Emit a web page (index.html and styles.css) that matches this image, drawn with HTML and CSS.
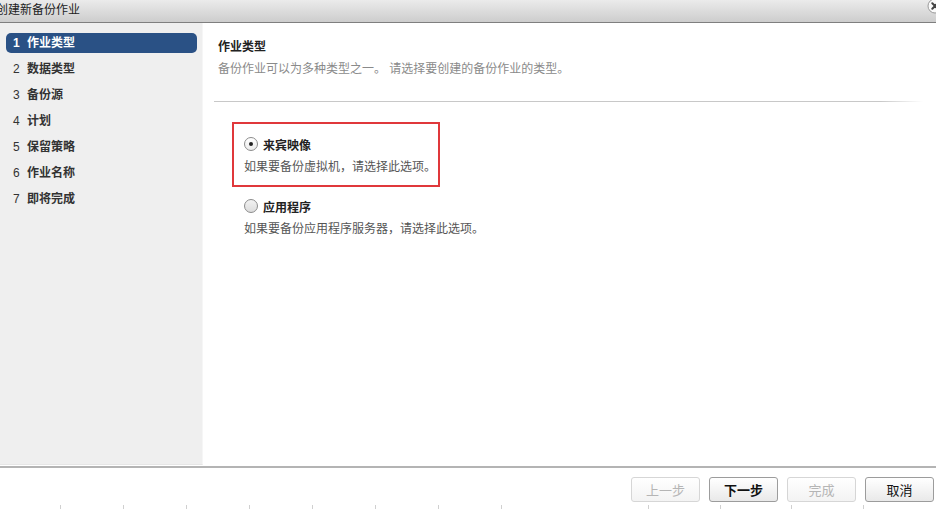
FILE: index.html
```html
<!DOCTYPE html>
<html lang="zh-CN">
<head>
  <meta charset="UTF-8">
  <meta name="viewport" content="width=device-width, initial-scale=1">
  <title>创建新备份作业</title>
  <link rel="stylesheet" href="styles.css">
</head>
<body>
  <div class="dialog">
    <!-- Title bar -->
    <div class="titlebar">
      <span class="title">创建新备份作业</span>
      <span class="close">
        <svg width="16" height="16" viewBox="0 0 16 16">
          <circle cx="8" cy="8" r="7" fill="#fafafa" stroke="#9a9a9a" stroke-width="1"/>
          <path d="M5.3 5.3 L10.7 10.7 M10.7 5.3 L5.3 10.7" stroke="#444" stroke-width="2" stroke-linecap="round"/>
        </svg>
      </span>
    </div>

    <div class="body">
      <!-- Steps -->
      <ul class="steps">
        <li class="step active"><span class="num">1</span>作业类型</li>
        <li class="step"><span class="num">2</span>数据类型</li>
        <li class="step"><span class="num">3</span>备份源</li>
        <li class="step"><span class="num">4</span>计划</li>
        <li class="step"><span class="num">5</span>保留策略</li>
        <li class="step"><span class="num">6</span>作业名称</li>
        <li class="step"><span class="num">7</span>即将完成</li>
      </ul>

      <!-- Content -->
      <div class="main">
        <div class="header">
          <div class="heading">作业类型</div>
          <div class="subtitle">备份作业可以为多种类型之一。 请选择要创建的备份作业的类型。</div>
        </div>
        <div class="separator"></div>

        <div class="options">
          <div class="option marked">
            <div class="radio-row"><span class="radio checked"></span><span class="label">来宾映像</span></div>
            <div class="desc">如果要备份虚拟机，请选择此选项。</div>
          </div>
          <div class="option">
            <div class="radio-row"><span class="radio"></span><span class="label">应用程序</span></div>
            <div class="desc">如果要备份应用程序服务器，请选择此选项。</div>
          </div>
        </div>
      </div>
    </div>

    <!-- Footer -->
    <div class="footer">
      <div class="buttons">
        <button class="button" disabled>上一步</button>
        <button class="button primary">下一步</button>
        <button class="button" disabled>完成</button>
        <button class="button">取消</button>
      </div>
      <div class="ticks">
        <div class="tick-group group-a">
          <span></span><span></span><span></span><span></span><span></span><span></span><span></span><span></span>
        </div>
        <div class="tick-group group-b">
          <span></span><span></span><span></span><span></span>
        </div>
      </div>
    </div>
  </div>
</body>
</html>
```

FILE: styles.css
```css
/* Wizard dialog */
html, body {
  margin: 0;
  padding: 0;
  background: #fff;
  overflow: hidden;
}
body {
  font-family: "Liberation Sans", "Noto Sans CJK SC", sans-serif;
  font-size: 12px;
  color: #333;
}
.dialog {
  width: 936px;
  height: 509px;
  display: flex;
  flex-direction: column;
  position: relative;
}

/* Title bar */
.titlebar {
  height: 22px;
  flex: none;
  background: linear-gradient(#ebebeb, #cdcdcd);
  border-bottom: 1px solid #7f7f7f;
  position: relative;
  display: flex;
  align-items: center;
}
.title {
  margin-left: -4px;
  font-size: 12px;
  color: #222;
  line-height: 16px;
  margin-top: -3px;
}
.close {
  position: absolute;
  right: -7px;
  top: -2px;
  width: 16px;
  height: 16px;
}

/* Body */
.body {
  flex: none;
  height: 443px;
  display: flex;
}
.steps {
  width: 203px;
  flex: none;
  margin: 0;
  padding: 10px 0 0;
  list-style: none;
  background: #efefef;
  border-right: 1px solid #f6f6f6;
  border-bottom: 1px solid #e6e6e6;
  box-sizing: border-box;
  height: 442px;
}
.step {
  height: 20px;
  line-height: 20px;
  margin: 0 5px 6px 6px;
  padding-left: 7px;
  border-radius: 5px;
  font-weight: bold;
  color: #333;
}
.step .num {
  font-weight: normal;
  display: inline-block;
  width: 14px;
}
.step.active {
  background: #2a5185;
  color: #fff;
}
.step.active .num {
  font-weight: bold;
}

.main {
  flex: 1;
  padding: 16px 13px 0 11px;
}
.header {
  padding-left: 4px;
}
.heading {
  font-weight: bold;
  line-height: 16px;
  color: #222;
}
.subtitle {
  margin-top: 6px;
  line-height: 16px;
  color: #8a8a8a;
}
.separator {
  margin-top: 24px;
  height: 1px;
  background: linear-gradient(to right, #c8c8c8 94%, rgba(200,200,200,0));
}

/* Options */
.options {
  margin: 34px 0 0 30px;
}
.option {
  position: relative;
  margin-bottom: 23px;
}
.option.marked::after {
  content: "";
  position: absolute;
  left: -12px;
  top: -14px;
  width: 204px;
  height: 61px;
  border: 2px solid #e0383b;
}
.radio-row {
  display: flex;
  align-items: center;
  height: 16px;
}
.radio {
  width: 12px;
  height: 12px;
  border: 1px solid #8c8c8c;
  border-radius: 50%;
  background: linear-gradient(#f2f2f2, #dcdcdc);
  position: relative;
  margin-right: 5px;
}
.radio.checked {
  background: linear-gradient(#ffffff, #ececec);
}
.radio.checked::after {
  content: "";
  position: absolute;
  left: 4px;
  top: 4px;
  width: 4px;
  height: 4px;
  border-radius: 50%;
  background: #222;
}
.label {
  font-weight: bold;
  color: #222;
}
.desc {
  margin-top: 7px;
  line-height: 16px;
  color: #555;
}

/* Footer */
.footer {
  flex: 1;
  border-top: 2px solid #b4b4b4;
  position: relative;
}
.buttons {
  display: flex;
  justify-content: flex-end;
  gap: 9px;
  padding: 9px 2px 0 0;
}
.button {
  width: 69px;
  height: 25px;
  border: 1px solid #9c9c9c;
  border-radius: 3px;
  background: linear-gradient(#ffffff, #e9e9e9);
  font-family: "Liberation Sans", "Noto Sans CJK SC", sans-serif;
  font-size: 13px;
  color: #111;
  padding: 0;
}
.button.primary {
  font-weight: bold;
}
.button:disabled {
  border-color: #d6d6d6;
  color: #b5b5b5;
  background: linear-gradient(#ffffff, #f3f3f3);
}

.ticks {
  position: absolute;
  left: 0;
  bottom: 0;
  height: 5px;
  width: 100%;
}
.tick-group {
  position: absolute;
  bottom: 0;
  display: flex;
}
.tick-group span {
  width: 1px;
  height: 4px;
  background: #d0d0d0;
}
.group-a {
  left: 60px;
  gap: 62px;
}
.group-b {
  left: 648px;
  gap: 70.7px;
}
```
